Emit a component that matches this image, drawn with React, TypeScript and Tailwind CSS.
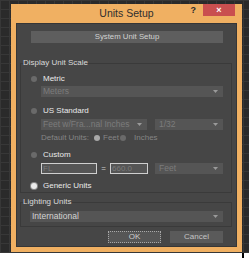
import type { ReactNode } from "react";

const font = { fontFamily: '"Liberation Sans", Arial, sans-serif' };

function Arrow() {
  return (
    <svg width="5" height="3" viewBox="0 0 5 3" className="shrink-0">
      <path d="M0 0 L5 0 L2.5 3 Z" fill="#9a9a9a" />
    </svg>
  );
}

function Dropdown({
  label,
  className = "",
  enabled = false,
}: {
  label: string;
  className?: string;
  enabled?: boolean;
}) {
  return (
    <div
      className={`flex items-center justify-between h-[11px] bg-[#555555] pl-[2px] pr-[5px] text-[8.5px] leading-none ${
        enabled ? "text-[#d4d4d4]" : "text-[#7c7c7c]"
      } ${className}`}
    >
      <span className="whitespace-nowrap">{label}</span>
      <Arrow />
    </div>
  );
}

function Radio({ state = "off", className = "" }: { state?: "off" | "on" | "dim"; className?: string }) {
  const look =
    state === "on"
      ? "bg-[#ececec] ring-1 ring-[#8a8a8a]"
      : state === "dim"
        ? "bg-[#a8a8a8]"
        : "bg-[#6a6a6a]";
  return <span className={`block w-[6px] h-[6px] rounded-full shrink-0 ${look} ${className}`} />;
}

function RadioRow({ label, className = "", on = false }: { label: string; className?: string; on?: boolean }) {
  return (
    <div className={`flex items-center h-[10px] pl-[10px] gap-[6px] ${className}`}>
      <Radio state={on ? "on" : "off"} />
      <span className="text-[8px] leading-none text-[#ebebeb]">{label}</span>
    </div>
  );
}

function Group({ title, children, className = "" }: { title: string; children: ReactNode; className?: string }) {
  return (
    <fieldset className={`border border-[#3a3a3a] ml-[3px] mr-[4px] ${className}`}>
      <legend className="ml-[2px] text-[8px] leading-[10px] text-[#dadada]">{title}</legend>
      {children}
    </fieldset>
  );
}

export default function App() {
  return (
    <div className="w-[249px] h-[258px] bg-white overflow-hidden flex flex-col" style={font}>
      <div className="h-[253px] bg-[#2a2a2a] bg-[linear-gradient(#373737_1px,transparent_1px),linear-gradient(90deg,#373737_1px,transparent_1px)] bg-size-[9px_9px] pt-[4px] pl-[11px]">
        <div className="w-[231px] h-[248px] bg-[#f0b062] flex flex-col px-[5px] pb-[5px]">
          {/* title bar */}
          <div className="h-[19px] grid grid-cols-[1fr_auto_1fr]">
            <div />
            <div className="text-[10.5px] leading-[19px] text-[#2e2e2e]">Units Setup</div>
            <div className="flex justify-end items-start pr-[2px]">
              <span className="text-[9px] font-bold leading-[12px] text-[#2a2a2a] mr-[7px]">?</span>
              <div className="w-[32px] h-[12px] bg-[#c94f4f] flex items-center justify-center text-white text-[9px] font-bold leading-none">
                ×
              </div>
            </div>
          </div>

          {/* body */}
          <div className="flex-1 bg-[#464646] border border-[#363636] flex flex-col">
            <div className="mt-[7px] ml-[14px] mr-[13px] h-[12px] bg-[#5e5e5e] flex items-center justify-center text-[7.8px] leading-none text-[#d2d2d2]">
              System Unit Setup
            </div>

            <Group title="Display Unit Scale" className="mt-[15px] pb-[1px]">
              <RadioRow label="Metric" className="mt-[6px]" />
              <Dropdown label="Meters" className="mt-[2px] ml-[20px] mr-[8px]" />

              <RadioRow label="US Standard" className="mt-[9px]" />
              <div className="flex mt-[3px] ml-[20px] mr-[8px] gap-[8px]">
                <Dropdown label="Feet w/Fra...nal Inches" className="w-[106px]" />
                <Dropdown label="1/32" className="flex-1 pl-[4px]" />
              </div>

              <div className="flex items-center h-[10px] mt-[3px] ml-[20px] text-[8px] leading-none text-[#858585]">
                <span>Default Units:</span>
                <Radio state="dim" className="ml-[5px]" />
                <span className="ml-[3px]">Feet</span>
                <Radio className="ml-[1px]" />
                <span className="ml-[8px]">Inches</span>
              </div>

              <RadioRow label="Custom" className="mt-[7px]" />
              <div className="flex items-center mt-[3px] ml-[20px] mr-[8px] h-[11px]">
                <div className="w-[56px] h-[11px] bg-[#555555] border border-[#cfcfcf] text-[8px] leading-[9px] pl-[1px] text-[#7c7c7c]">
                  FL
                </div>
                <span className="w-[13px] text-center text-[8px] leading-none text-[#d0d0d0]">=</span>
                <div className="w-[38px] h-[11px] bg-[#555555] border border-[#cfcfcf] text-[8px] leading-[9px] pl-[1px] text-[#7c7c7c]">
                  660.0
                </div>
                <Dropdown label="Feet" className="ml-[7px] flex-1 pl-[4px]" />
              </div>

              <RadioRow label="Generic Units" on className="mt-[7px]" />
            </Group>

            <Group title="Lighting Units" className="mt-[4px] pb-[4px]">
              <Dropdown label="International" enabled className="mt-[4px] ml-[9px] mr-[8px]" />
            </Group>

            <div className="flex justify-end gap-[9px] mt-[4px] mr-[13px]">
              <div className="w-[53px] h-[12px] bg-[#565656] border border-dotted border-[#a8a8a8] flex items-center justify-center text-[8px] leading-none text-[#cfcfcf]">
                OK
              </div>
              <div className="w-[53px] h-[12px] bg-[#5a5a5a] flex items-center justify-center text-[8px] leading-none text-[#c4c4c4]">
                Cancel
              </div>
            </div>
          </div>
        </div>
      </div>
      <div className="h-[5px] flex">
        <div className="ml-[242px] w-[2px] h-full bg-black" />
      </div>
    </div>
  );
}
